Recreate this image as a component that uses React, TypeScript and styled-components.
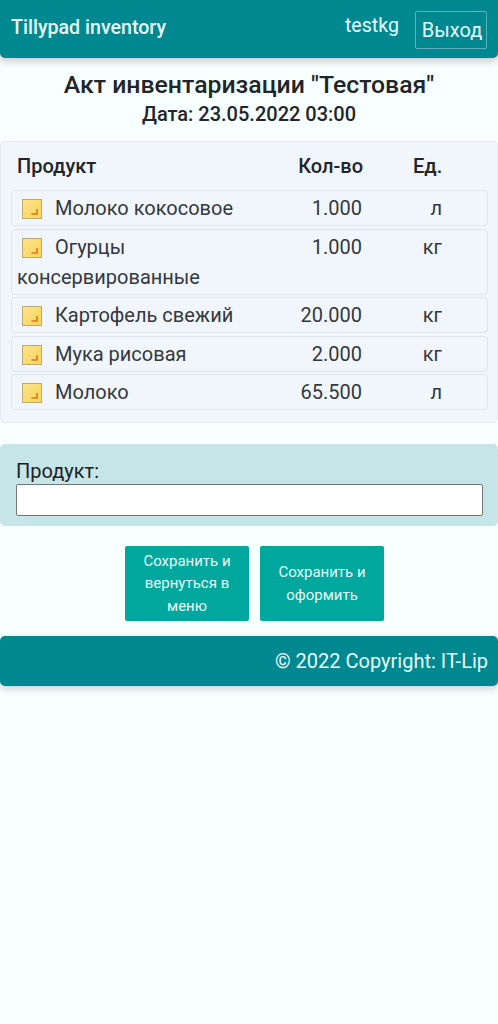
import React from "react";
import styled, { createGlobalStyle } from "styled-components";

const GlobalStyle = createGlobalStyle`
  html, body { margin: 0; padding: 0; }
  body {
    background: #f7ffff;
    font-family: Roboto, "Liberation Sans", sans-serif;
    color: #212529;
  }
`;

const Page = styled.div`
  width: 498px;
  min-height: 1024px;
  display: flex;
  flex-direction: column;
`;

const Header = styled.header`
  height: 58px;
  background: #008891;
  border-radius: 0 0 5px 5px;
  box-shadow: 0 3px 8px rgba(0, 0, 0, 0.22);
  display: flex;
  align-items: center;
  padding: 0 11px 0 11px;
  color: #e6fbfb;
`;

const Brand = styled.div`
  font-size: 19.6px;
  font-weight: 500;
  flex: 1;
  margin-bottom: 4px;
`;

const UserName = styled.div`
  font-size: 19.6px;
  margin-right: 16px;
  margin-bottom: 8px;
`;

const LogoutButton = styled.button`
  width: 72px;
  height: 38px;
  padding: 0 0 0 2px;
  margin-top: 2px;
  background: transparent;
  border: 1px solid #5fb3b8;
  border-radius: 2px;
  color: #e6fbfb;
  font: 400 20px Roboto, sans-serif;
`;

const Title = styled.h1`
  margin: 12px 0 0;
  height: 29px;
  font-size: 24.8px;
  line-height: 29px;
  font-weight: 500;
  text-align: center;
`;

const DateLine = styled.h2`
  margin: 2px 0 0;
  height: 26px;
  font-size: 20px;
  line-height: 26px;
  font-weight: 500;
  text-align: center;
`;

const TablePanel = styled.section`
  margin-top: 14px;
  height: 282px;
  box-sizing: border-box;
  background: #f1f6fd;
  border: 1px solid #e3e9f0;
  border-radius: 5px;
  padding: 0 9px 0 10px;
`;

const HeadRow = styled.div`
  display: grid;
  grid-template-columns: 256px 90px 80px;
  height: 48px;
  align-items: center;
  padding: 0 6px;
  font-size: 20px;
  font-weight: 500;
`;

const HeadQty = styled.div`
  text-align: right;
`;

const HeadUnit = styled.div`
  padding-left: 50px;
  white-space: nowrap;
`;

const Rows = styled.div`
  display: flex;
  flex-direction: column;
  gap: 2.5px;
`;

const Row = styled.div`
  display: grid;
  grid-template-columns: 255px 90px 80px;
  box-sizing: border-box;
  min-height: 36px;
  padding: 2px 5px 2px;
  background: #f1f6fd;
  border: 1px solid #dfe5ec;
  border-radius: 4px;
  font-size: 20px;
  line-height: 30px;
  color: #33383d;
`;

const ProductName = styled.div`
  min-width: 0;
`;

const NoteIcon = styled.svg`
  width: 20px;
  height: 20px;
  margin: 0 13px 0 5px;
  vertical-align: -4px;
`;

const Qty = styled.div`
  text-align: right;
`;

const Unit = styled.div`
  text-align: right;
`;

const SearchPanel = styled.section`
  margin-top: 21px;
  height: 82px;
  box-sizing: border-box;
  background: #c5e5e8;
  border-radius: 5px;
  padding: 14px 16px 0;
`;

const SearchLabel = styled.label`
  display: block;
  font-size: 20px;
  line-height: 26px;
  color: #1c2125;
`;

const SearchInput = styled.input`
  display: block;
  width: 467px;
  height: 32px;
  box-sizing: border-box;
  background: #fff;
  border: 1px solid #767676;
  border-radius: 2px;
`;

const Actions = styled.div`
  margin-top: 20px;
  display: flex;
  justify-content: center;
  gap: 11px;
  padding-left: 11px;
`;

const ActionButton = styled.button`
  width: 124px;
  height: 75px;
  padding: 0 10px;
  background: #00a79d;
  border: none;
  border-radius: 2px;
  color: #e6fbf8;
  font: 400 15px/22.5px Roboto, sans-serif;
`;

const Footer = styled.footer`
  margin-top: 15px;
  height: 50px;
  background: #008891;
  border-radius: 5px;
  box-shadow: 0 3px 8px rgba(0, 0, 0, 0.18);
  display: flex;
  align-items: center;
  justify-content: flex-end;
  padding: 0 10px;
  color: #e6fbfb;
  font-size: 20px;
`;

const products = [
  { name: "Молоко кокосовое", qty: "1.000", unit: "л" },
  { name: "Огурцы консервированные", qty: "1.000", unit: "кг" },
  { name: "Картофель свежий", qty: "20.000", unit: "кг" },
  { name: "Мука рисовая", qty: "2.000", unit: "кг" },
  { name: "Молоко", qty: "65.500", unit: "л" },
];

const Note = () => (
  <NoteIcon viewBox="0 0 20 20">
    <defs>
      <linearGradient id="noteFill" x1="0" y1="0" x2="1" y2="1">
        <stop offset="0" stopColor="#fbe48c" />
        <stop offset="1" stopColor="#f9d457" />
      </linearGradient>
    </defs>
    <rect x="0.5" y="0.5" width="19" height="19" fill="url(#noteFill)" stroke="#b9a878" />
    <path d="M15 10v5h-5.5" fill="none" stroke="#d9771a" strokeWidth="1.6" />
  </NoteIcon>
);

export default function App() {
  return (
    <Page>
      <GlobalStyle />
      <Header>
        <Brand>Tillypad inventory</Brand>
        <UserName>testkg</UserName>
        <LogoutButton>Выход</LogoutButton>
      </Header>
      <Title>Акт инвентаризации "Тестовая"</Title>
      <DateLine>Дата: 23.05.2022 03:00</DateLine>
      <TablePanel>
        <HeadRow>
          <div>Продукт</div>
          <HeadQty>Кол-во</HeadQty>
          <HeadUnit>Ед.</HeadUnit>
        </HeadRow>
        <Rows>
          {products.map((p) => (
            <Row key={p.name}>
              <ProductName>
                <Note />
                {p.name}
              </ProductName>
              <Qty>{p.qty}</Qty>
              <Unit>{p.unit}</Unit>
            </Row>
          ))}
        </Rows>
      </TablePanel>
      <SearchPanel>
        <SearchLabel>Продукт:</SearchLabel>
        <SearchInput />
      </SearchPanel>
      <Actions>
        <ActionButton>Сохранить и вернуться в меню</ActionButton>
        <ActionButton>Сохранить и оформить</ActionButton>
      </Actions>
      <Footer>© 2022 Copyright: IT-Lip</Footer>
    </Page>
  );
}
